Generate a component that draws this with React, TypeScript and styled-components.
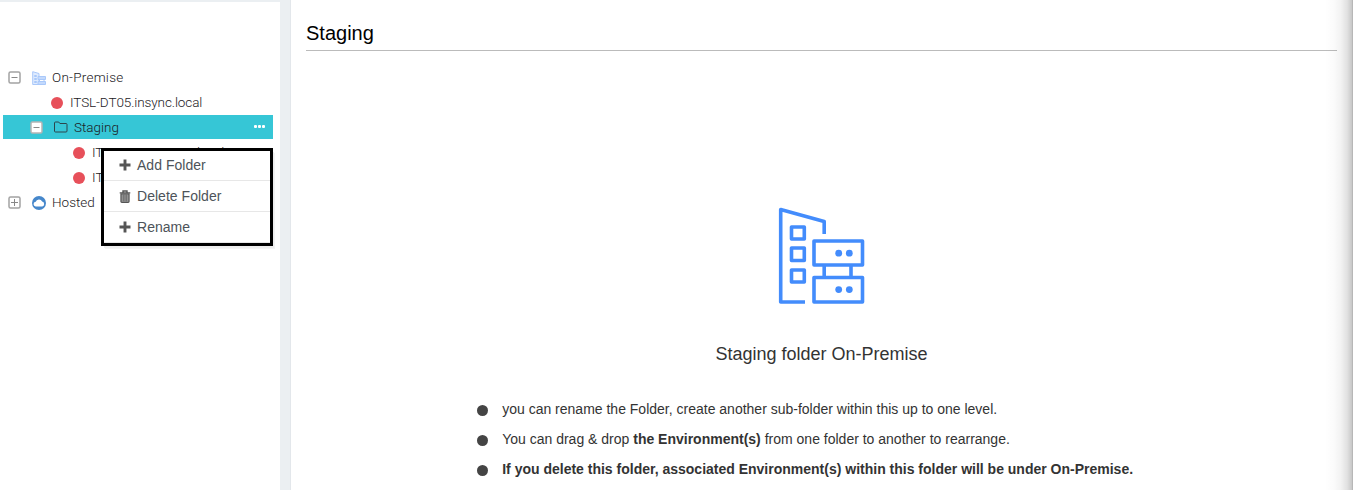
import React from 'react';
import styled, { createGlobalStyle } from 'styled-components';

const GlobalStyle = createGlobalStyle`
  * { box-sizing: border-box; }
  body { margin: 0; background: #fff; font-family: "Liberation Sans", Arial, sans-serif; overflow: hidden; }
`;

const Page = styled.div`
  display: flex;
  height: 490px;
  background: #ebeff2;
`;

const Sidebar = styled.aside`
  position: relative;
  width: 280px;
  margin: 2px 10px 0 0;
  padding: 63px 7px 0 3px;
  background: #fff;
`;

const TreeRow = styled.div<{ $indent: number; $active?: boolean }>`
  display: flex;
  align-items: center;
  height: ${p => (p.$active ? 24 : 25)}px;
  margin-bottom: ${p => (p.$active ? 1 : 0)}px;
  padding-left: ${p => p.$indent}px;
  padding-right: 8px;
  background: ${p => (p.$active ? '#36c6d6' : 'transparent')};
`;

const Label = styled.span<{ $gap: number; $spacing?: number }>`
  margin-left: ${p => p.$gap}px;
  margin-bottom: 1px;
  font: 300 13.5px/24px Roboto, "Open Sans", sans-serif;
  letter-spacing: ${p => p.$spacing ?? 0}px;
  color: #1c2024;
  white-space: nowrap;
`;

const Dot = styled.span`
  width: 12px;
  height: 12px;
  border-radius: 50%;
  background: #e7505a;
`;

const IconBox = styled.span<{ $left: number }>`
  display: flex;
  margin-left: ${p => p.$left}px;
`;

const More = styled.span`
  display: flex;
  gap: 1px;
  margin: 0 0 1px auto;
  i { width: 3px; height: 3px; background: #fff; border-radius: 1px; }
`;

const Menu = styled.div`
  position: absolute;
  left: 101px;
  top: 146px;
  width: 172px;
  height: 98px;
  border: 3px solid #000;
  background: #fff;
  box-shadow: 2px 3px 0 -1px #eee, 3px 4px 0 -1px #f3f3f3;
`;

const MenuItem = styled.div`
  display: flex;
  align-items: center;
  height: 31px;
  padding-left: 15px;
  border-bottom: 1px solid #e7e7e7;
  color: #4d5359;
  font-size: 14px;
  letter-spacing: 0.03px;
  &:first-child { height: 30px; padding-bottom: 1px; }
  svg { margin-right: 6px; flex: none; }
`;

const Main = styled.main`
  flex: 1;
  display: flex;
  flex-direction: column;
  min-width: 0;
  padding-left: 15px;
  border-left: 1px solid #e3e7eb;
  background: #fff;
`;

const Title = styled.h1`
  width: 1031px;
  height: 51px;
  margin: 0;
  padding-top: 21px;
  border-bottom: 1px solid #bbb;
  color: #000;
  font-size: 20px;
  font-weight: 400;
  line-height: 24px;
`;

const Hero = styled.section`
  display: flex;
  flex-direction: column;
  align-items: center;
  width: 1031px;
  padding-top: 156px;
`;

const Caption = styled.h2`
  margin: 37px 0 0;
  color: #333;
  font-size: 18px;
  font-weight: 400;
  line-height: 24px;
`;

const Notes = styled.ul`
  margin: 28px 0 0 171px;
  padding: 0;
  list-style: none;
`;

const Note = styled.li`
  display: flex;
  align-items: center;
  height: 30px;
  color: #333;
  font-size: 14px;
  white-space: pre;
  &::before {
    content: '';
    width: 11px;
    height: 11px;
    margin: 2px 14.2px 0 0;
    border-radius: 50%;
    background: #444;
  }
`;

const EdgeShade = styled.div`
  position: absolute;
  top: 0;
  left: 1325px;
  width: 28px;
  height: 490px;
  background: linear-gradient(to right, rgba(0,0,0,0) 0%, rgba(0,0,0,.015) 30%, rgba(0,0,0,.05) 57%, rgba(0,0,0,.12) 80%, rgba(0,0,0,.21) 95%, rgba(0,0,0,.32) 100%);
`;

const Toggle = ({ open, light }: { open?: boolean; light?: boolean }) => (
  <svg width="13" height="13" viewBox="0 0 13 13" fill="none">
    <rect x="1" y="1" width="11" height="11" rx="1.5" fill="#fff" stroke={light ? '#b5b5b5' : '#a3a3a3'} strokeWidth="1.5" />
    <path d={open ? 'M3.5 6.5h6' : 'M3 6.5h7M6.5 3v7'} stroke="#888" />
  </svg>
);

const SmallBuilding = () => (
  <svg width="14" height="14" viewBox="0 0 14 14" fill="none" stroke="#a9c8fa">
    <path d="M.7 13.5V.7L7 2.5V13.5z" fill="#dfebfe" />
    <path d="M2.5 4.5h2v1h-2zM2.5 7.5h2v1h-2zM2.5 10.5h2v1h-2z" />
    <path d="M6 5.5h7.5v3H6zM6 10.5h7.5v3H6zM7.5 8.5v2M12 8.5v2" fill="#c3d9fc" />
  </svg>
);

const FolderIcon = () => (
  <svg width="14" height="12" viewBox="0 0 14 12" fill="none" stroke="#2c454c" strokeWidth="1">
    <path d="M1.5 1h3.2l1.2 1.5h6.1q1 0 1 1v6.5q0 1-1 1H1.5q-1 0-1-1V2q0-1 1-1z" />
  </svg>
);

const CloudIcon = () => (
  <svg width="14" height="14" viewBox="0 0 14 14">
    <circle cx="7" cy="7" r="7" fill="#4687cb" />
    <path d="M4 10.4a2.3 2.3 0 0 1-.3-4.6 3.4 3.4 0 0 1 6.4-.3A2.5 2.5 0 0 1 10.2 10.4z" fill="#fff" />
  </svg>
);

const PlusIcon = () => (
  <svg width="12" height="12" viewBox="0 0 12 12"><path d="M6 .5v11M.5 6h11" stroke="#555" strokeWidth="2.9" /></svg>
);

const TrashIcon = () => (
  <svg width="12" height="13" viewBox="0 0 12 13" fill="none" stroke="#555">
    <path d="M4 2.3V1h4v1.3M.7 2.9h10.6" strokeWidth="1.4" />
    <path d="M2 3.8h8v7.7q0 .8-.8.8H2.8q-.8 0-.8-.8z" fill="#aaa" strokeWidth="1.3" />
    <path d="M4.2 4.5v7M6 4.5v7M7.8 4.5v7" strokeWidth=".9" />
  </svg>
);

const BuildingArt = () => (
  <svg width="88" height="98" viewBox="0 0 88 98" fill="none" stroke="#438cfc" strokeWidth="3.6" strokeLinejoin="round">
    <path d="M27 95H2.7V2.5L46.2 14.5V27" />
    <path d="M13.5 20h12.8v12H13.5zM13.5 41h12.8v12.5H13.5zM13.5 63h12.8v12H13.5z" />
    <path d="M36 34h48.5v24H36zM36 70.5h48.5V95H36zM46.2 58v12.5M73 58v12.5" />
    <g fill="#438cfc" stroke="none">
      <circle cx="60.7" cy="46.2" r="3.4" /><circle cx="71.3" cy="46.2" r="3.4" />
      <circle cx="60.7" cy="82.6" r="3.4" /><circle cx="71.3" cy="82.6" r="3.4" />
    </g>
  </svg>
);

export default function App() {
  return (
    <>
      <GlobalStyle />
      <Page>
        <Sidebar>
          <TreeRow $indent={5}><Toggle open /><IconBox $left={11}><SmallBuilding /></IconBox><Label $gap={6} $spacing={0.25}>On-Premise</Label></TreeRow>
          <TreeRow $indent={48}><Dot /><Label $gap={7} $spacing={-0.1}>ITSL-DT05.insync.local</Label></TreeRow>
          <TreeRow $indent={27} $active><Toggle open light /><IconBox $left={11}><FolderIcon /></IconBox><Label $gap={6}>Staging</Label><More><i /><i /><i /></More></TreeRow>
          <TreeRow $indent={70}><Dot /><Label $gap={7} $spacing={-0.1}>ITSL-DT05.insync.local</Label></TreeRow>
          <TreeRow $indent={70}><Dot /><Label $gap={7}>ITSL-DT05</Label></TreeRow>
          <TreeRow $indent={5}><Toggle /><IconBox $left={11}><CloudIcon /></IconBox><Label $gap={6}>Hosted</Label></TreeRow>
          <Menu>
            <MenuItem><PlusIcon />Add Folder</MenuItem>
            <MenuItem><TrashIcon />Delete Folder</MenuItem>
            <MenuItem><PlusIcon />Rename</MenuItem>
          </Menu>
        </Sidebar>
        <Main>
          <Title>Staging</Title>
          <Hero><BuildingArt /><Caption>Staging folder On-Premise</Caption></Hero>
          <Notes>
            <Note>you can rename the Folder, create another sub-folder within this up to one level.</Note>
            <Note>You can drag &amp; drop <b>the Environment(s)</b> from one folder to another to rearrange.</Note>
            <Note><b>If you delete this folder, associated Environment(s) within this folder will be under On-Premise.</b></Note>
          </Notes>
        </Main>
        <EdgeShade />
      </Page>
    </>
  );
}
